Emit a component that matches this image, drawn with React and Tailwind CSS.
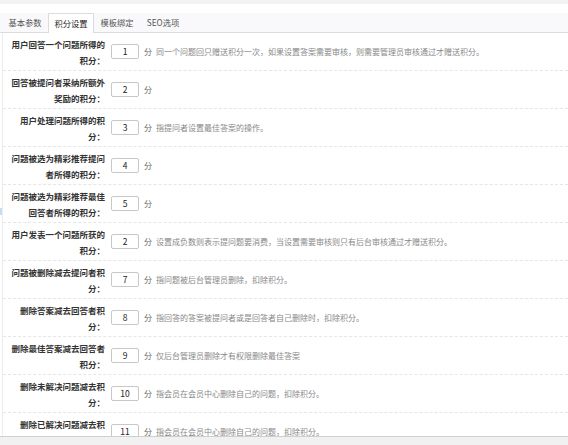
import React from "react";

const rows = [
  ["用户回答一个问题所得的积分：", "1", "同一个问题回只赠送积分一次，如果设置答案需要审核，则需要管理员审核通过才赠送积分。"],
  ["回答被提问者采纳所额外奖励的积分：", "2", ""],
  ["用户处理问题所得的积分：", "3", "指提问者设置最佳答案的操作。"],
  ["问题被选为精彩推荐提问者所得的积分：", "4", ""],
  ["问题被选为精彩推荐最佳回答者所得的积分：", "5", ""],
  ["用户发表一个问题所获的积分：", "2", "设置成负数则表示提问题要消费，当设置需要审核则只有后台审核通过才赠送积分。"],
  ["问题被删除减去提问者积分：", "7", "指问题被后台管理员删除，扣除积分。"],
  ["删除答案减去回答者积分：", "8", "指回答的答案被提问者或是回答者自己删除时，扣除积分。"],
  ["删除最佳答案减去回答者积分：", "9", "仅后台管理员删除才有权限删除最佳答案"],
  ["删除未解决问题减去积分：", "10", "指会员在会员中心删除自己的问题，扣除积分。"],
  ["删除已解决问题减去积分：", "11", "指会员在会员中心删除自己的问题，扣除积分。"],
];

const tabs = ["基本参数", "积分设置", "模板绑定", "SEO选项"];

export default function App() {
  return (
    <div
      className="relative w-[568px] h-[445px] flex flex-col overflow-hidden bg-white"
      style={{ fontFamily: '"Noto Sans CJK SC", "Noto Sans", sans-serif' }}
    >
      <div className="h-[4px] bg-[#f3f3f3] shrink-0" />
      <div className="h-[9px] shrink-0" />
      <div className="h-[20px] shrink-0 flex items-end pl-[2px] bg-[#f9f9fb] border-b border-[#dcdcdc]">
        {tabs.map((t, i) =>
          i === 1 ? (
            <div
              key={t}
              className="h-[20px] -mb-px w-[46px] flex items-center justify-center bg-white border border-b-0 border-[#dcdcdc] text-[8.25px] leading-none text-[#222]"
            >
              {t}
            </div>
          ) : (
            <div
              key={t}
              className="h-[19px] w-[46px] flex items-center justify-center text-[8.25px] leading-none text-[#555]"
            >
              {t}
            </div>
          )
        )}
      </div>
      <div className="flex-1 overflow-hidden ml-[2px] border-l border-[#ececec]">
        {rows.map(([label, val, desc], i) => (
          <div
            key={i}
            className="h-[38px] shrink-0 flex items-center border-b border-dashed border-[#e6e6e6]"
          >
            <div className="w-[102px] pl-[7px] text-right font-bold text-[8.5px] leading-[16px] text-[#333]">
              {label}
            </div>
            <div className="ml-[6px] w-[28px] h-[15px] border border-[#c8c8c8] rounded-[2px] flex items-center justify-center text-[8.5px] leading-none text-[#222]">
              {val}
            </div>
            <div className="ml-[5px] text-[8px] leading-none text-[#666] whitespace-nowrap">分</div>
            {desc && (
              <div className="ml-[4px] text-[8px] leading-none text-[#888] whitespace-nowrap">
                {desc}
              </div>
            )}
          </div>
        ))}
      </div>
      <div className="h-[9px] shrink-0 bg-[#f1f1f1] border-t border-[#cfcfcf]" />
      <div className="absolute left-0 top-[208px] w-[2px] h-[7px] bg-[#c9dcf2]" />
    </div>
  );
}
